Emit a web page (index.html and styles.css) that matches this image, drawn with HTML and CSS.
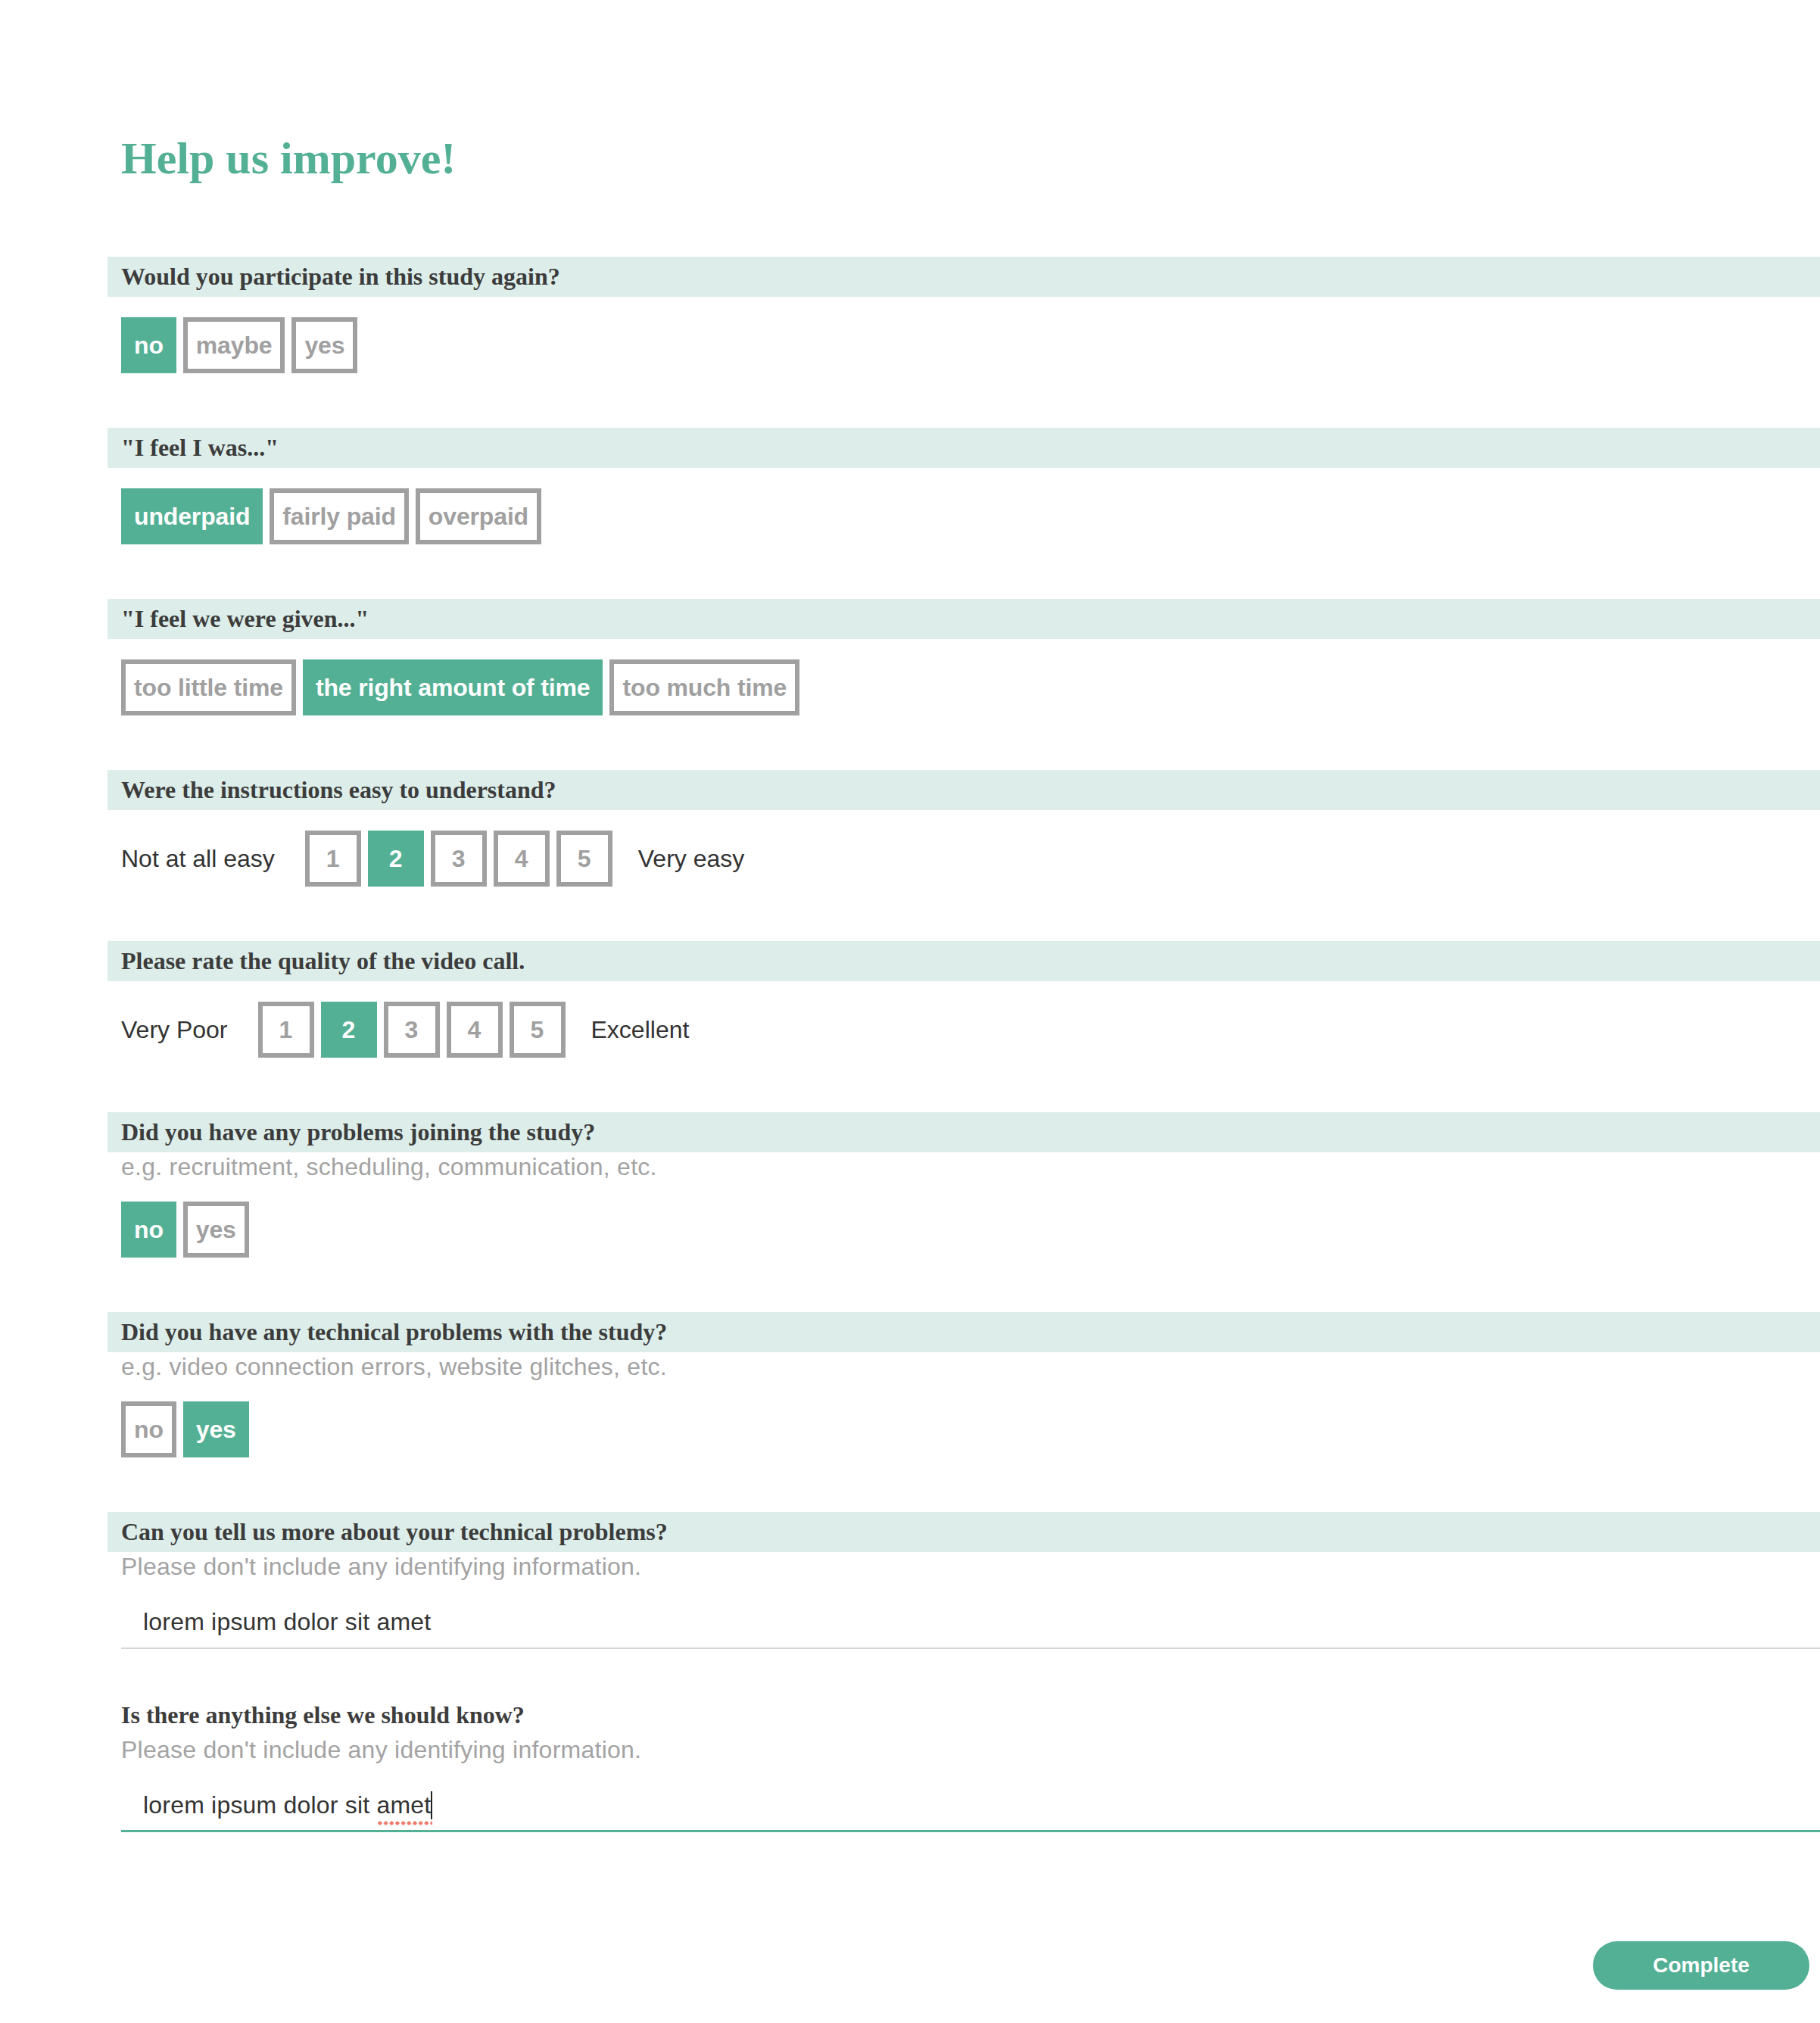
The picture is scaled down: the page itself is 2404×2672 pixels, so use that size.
FILE: index.html
```html
<!DOCTYPE html>
<html lang="en">
<head>
<meta charset="utf-8">
<title>Help us improve!</title>
<link rel="stylesheet" href="styles.css">
</head>
<body>
<main class="page">
  <h1 class="title">Help us improve!</h1>

  <section class="q">
    <h2 class="q-head">Would you participate in this study again?</h2>
    <div class="options">
      <span class="opt is-on">no</span>
      <span class="opt">maybe</span>
      <span class="opt">yes</span>
    </div>
  </section>

  <section class="q">
    <h2 class="q-head">"I feel I was..."</h2>
    <div class="options">
      <span class="opt is-on">underpaid</span>
      <span class="opt">fairly paid</span>
      <span class="opt">overpaid</span>
    </div>
  </section>

  <section class="q">
    <h2 class="q-head">"I feel we were given..."</h2>
    <div class="options">
      <span class="opt">too little time</span>
      <span class="opt is-on">the right amount of time</span>
      <span class="opt">too much time</span>
    </div>
  </section>

  <section class="q">
    <h2 class="q-head">Were the instructions easy to understand?</h2>
    <div class="scale">
      <span class="scale-label scale-label--low">Not at all easy</span>
      <div class="options">
        <span class="opt opt--num">1</span>
        <span class="opt opt--num is-on">2</span>
        <span class="opt opt--num">3</span>
        <span class="opt opt--num">4</span>
        <span class="opt opt--num">5</span>
      </div>
      <span class="scale-label scale-label--high">Very easy</span>
    </div>
  </section>

  <section class="q">
    <h2 class="q-head">Please rate the quality of the video call.</h2>
    <div class="scale">
      <span class="scale-label scale-label--low">Very Poor</span>
      <div class="options">
        <span class="opt opt--num">1</span>
        <span class="opt opt--num is-on">2</span>
        <span class="opt opt--num">3</span>
        <span class="opt opt--num">4</span>
        <span class="opt opt--num">5</span>
      </div>
      <span class="scale-label scale-label--high">Excellent</span>
    </div>
  </section>

  <section class="q">
    <h2 class="q-head">Did you have any problems joining the study?</h2>
    <p class="hint">e.g. recruitment, scheduling, communication, etc.</p>
    <div class="options">
      <span class="opt is-on">no</span>
      <span class="opt">yes</span>
    </div>
  </section>

  <section class="q">
    <h2 class="q-head">Did you have any technical problems with the study?</h2>
    <p class="hint">e.g. video connection errors, website glitches, etc.</p>
    <div class="options">
      <span class="opt">no</span>
      <span class="opt is-on">yes</span>
    </div>
  </section>

  <section class="q q--text">
    <h2 class="q-head">Can you tell us more about your technical problems?</h2>
    <p class="hint">Please don't include any identifying information.</p>
    <div class="field">lorem ipsum dolor sit amet</div>
  </section>

  <section class="q q--text q--plain">
    <h2 class="q-head">Is there anything else we should know?</h2>
    <p class="hint">Please don't include any identifying information.</p>
    <div class="field field--focus">lorem ipsum dolor sit <span class="misspelled">amet</span><span class="caret"></span></div>
  </section>

  <div class="actions">
    <button class="complete" type="button">Complete</button>
  </div>
</main>
</body>
</html>
```

FILE: styles.css
```css
html, body {
  margin: 0;
  padding: 0;
  background: #ffffff;
}

body {
  font-family: "Liberation Sans", Arial, sans-serif;
  color: #333333;
  overflow-x: hidden;
}

.page {
  padding: 179px 0 0 142px;
}

.title {
  margin: 0 0 100px 0;
  padding-left: 18px;
  font-family: "Liberation Serif", "Times New Roman", serif;
  font-weight: bold;
  font-size: 60px;
  line-height: 60px;
  color: #53b095;
}

.q {
  margin-bottom: 72px;
}

.q--text {
  margin-bottom: 61px;
}

.q-head {
  margin: 0;
  height: 53px;
  padding-left: 18px;
  background: #ddeeea;
  font-family: "Liberation Serif", "Times New Roman", serif;
  font-weight: bold;
  font-size: 32px;
  line-height: 53px;
  color: #3c3c3c;
  white-space: nowrap;
}

.q--plain .q-head {
  background: transparent;
}

.hint {
  margin: 0;
  padding-left: 18px;
  font-size: 32px;
  line-height: 38px;
  letter-spacing: 0.25px;
  color: #a3a3a3;
}

.options {
  display: flex;
  gap: 9px;
}

.q > .options {
  margin-top: 27px;
  padding-left: 18px;
}

.opt {
  box-sizing: border-box;
  height: 74px;
  padding: 0 11px;
  border: 6px solid #a0a0a0;
  background: #ffffff;
  font-size: 32px;
  font-weight: bold;
  line-height: 62px;
  letter-spacing: -0.15px;
  color: #a0a0a0;
  white-space: nowrap;
}

.opt.is-on {
  background: #53b095;
  border-color: #53b095;
  color: #ffffff;
}

.opt--num {
  width: 74px;
  padding: 0;
  letter-spacing: 0;
  text-align: center;
}

.scale {
  display: flex;
  align-items: center;
  margin-top: 27px;
  padding-left: 18px;
}

.scale-label {
  font-size: 32px;
  color: #333333;
  white-space: nowrap;
}

.scale-label--low {
  margin-right: 40px;
}

.scale-label--high {
  margin-left: 34px;
}

.field {
  margin-left: 18px;
  padding: 35px 0 15px 29px;
  font-size: 32px;
  line-height: 38px;
  letter-spacing: 0.2px;
  color: #333333;
  border-bottom: 2px solid #d5d5d5;
}

.field.field--focus {
  border-bottom: 3px solid #53b095;
  padding-bottom: 14px;
}

.misspelled {
  position: relative;
}

.misspelled::after {
  content: "";
  position: absolute;
  left: 0;
  right: -2px;
  bottom: -9px;
  height: 6px;
  background-image: radial-gradient(circle, #f07a6c 2.3px, transparent 2.8px);
  background-size: 7.7px 6px;
  background-repeat: repeat-x;
}

.caret {
  display: inline-block;
  width: 2px;
  height: 37px;
  background: #222222;
  vertical-align: -8px;
}

.actions {
  display: flex;
  justify-content: flex-end;
  margin-top: 144px;
  padding: 0 14px 45px 0;
}

.complete {
  width: 286px;
  height: 64px;
  border: none;
  border-radius: 32px;
  background: #53b095;
  color: #ffffff;
  font-family: "Liberation Sans", Arial, sans-serif;
  font-weight: bold;
  font-size: 28px;
  padding: 0;
  cursor: pointer;
}
```
